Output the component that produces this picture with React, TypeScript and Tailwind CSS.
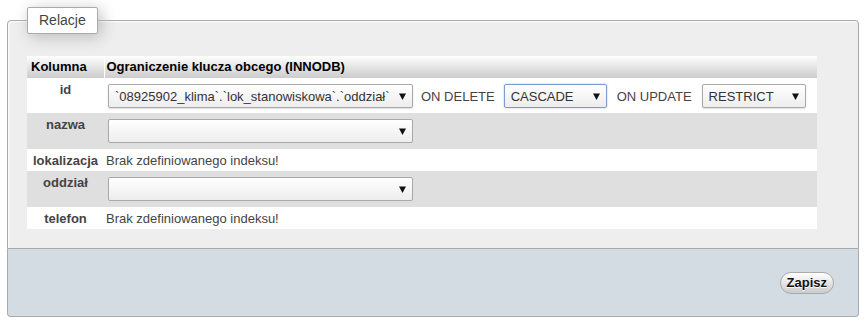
import React from "react";

const FONT = { fontFamily: '"Liberation Sans", Arial, sans-serif' };

function Arrow() {
  return (
    <svg width="7" height="7" viewBox="0 0 7 7" className="shrink-0">
      <polygon points="0,0.5 7,0.5 3.5,7" fill="#111" />
    </svg>
  );
}

function FakeSelect({
  value,
  width,
  focused,
}: {
  value: string;
  width: string;
  focused?: boolean;
}) {
  return (
    <div
      className={
        "flex h-[24px] shrink-0 items-center rounded-[2px] border bg-gradient-to-b from-white to-[#ededed] pl-[6px] pr-[6px] text-[13px] text-[#333] " +
        width +
        (focused
          ? " border-[#7b9ccf] shadow-[0_0_2px_#9fb9e0]"
          : " border-[#a9a9a9] shadow-[0_1px_2px_#ddd]")
      }
    >
      <span className="flex-1 overflow-hidden whitespace-nowrap pr-[10px] leading-[15px]">
        {value}
      </span>
      <Arrow />
    </div>
  );
}

const rows = [
  { name: "id", kind: "fk", bg: "bg-white", h: "h-[35px]" },
  { name: "nazwa", kind: "select", bg: "bg-[#dfdfdf]", h: "h-[36px]" },
  { name: "lokalizacja", kind: "none", bg: "bg-white", h: "h-[22px]" },
  { name: "oddział", kind: "select", bg: "bg-[#dfdfdf]", h: "h-[36px]" },
  { name: "telefon", kind: "none", bg: "bg-white", h: "h-[22px]" },
];

export default function App() {
  return (
    <div className="w-[866px] bg-white pt-[7px] text-[13px] text-[#444]" style={FONT}>
      <fieldset className="mx-[7px] rounded-t-[4px] border border-[#aaa] bg-[#eee] pb-[19px] pl-[19px] pr-[40px] pt-0 shadow-[inset_1px_1px_2px_#fff]">
        <legend className="rounded-[2px] border border-[#aaa] bg-white px-[11px] py-[4px] text-[14px] leading-[17px] text-[#444] shadow-[3px_3px_15px_#bbb]">
          Relacje
        </legend>
        <table className="mt-[22px] w-[790px] border-collapse">
          <thead>
            <tr className="h-[22px] bg-gradient-to-b from-white to-[#cccccc] text-left font-bold text-black">
              <th className="w-[77px] border-r border-white pl-[4px] font-bold">Kolumna</th>
              <th className="pl-[2px] font-bold">Ograniczenie klucza obcego (INNODB)</th>
            </tr>
          </thead>
          <tbody>
            {rows.map((r) => (
              <tr key={r.name} className={r.bg + " " + r.h}>
                <td
                  className={
                    "px-[4px] text-center font-bold leading-[15px] " +
                    (r.kind === "none" ? "align-middle" : "pt-[4px] align-top")
                  }
                >
                  {r.name}
                </td>
                {r.kind === "none" ? (
                  <td className="pl-[2px] align-middle leading-[15px]">
                    Brak zdefiniowanego indeksu!
                  </td>
                ) : r.kind === "select" ? (
                  <td className="pl-[4px] pt-[6px] align-top">
                    <FakeSelect value="" width="w-[305px]" />
                  </td>
                ) : (
                  <td className="pl-[4px] pt-[6px] align-top">
                    <div className="flex items-center">
                      <FakeSelect
                        value="`08925902_klima`.`lok_stanowiskowa`.`oddział`"
                        width="w-[305px]"
                      />
                      <span className="ml-[8px] mr-[9px] leading-[15px]">ON DELETE</span>
                      <FakeSelect value="CASCADE" width="w-[103px]" focused />
                      <span className="ml-[10px] mr-[10px] leading-[15px]">ON UPDATE</span>
                      <FakeSelect value="RESTRICT" width="w-[104px]" />
                    </div>
                  </td>
                )}
              </tr>
            ))}
          </tbody>
        </table>
      </fieldset>
      <div className="mx-[7px] flex h-[68px] items-center justify-end rounded-b-[4px] border border-t-0 border-[#aaa] bg-[#d3dce3] pr-[24px]">
        <button className="h-[22px] rounded-[20px] border border-[#aaa] bg-gradient-to-b from-white to-[#cccccc] px-[6px] text-[13px] font-bold leading-[15px] text-[#111] [text-shadow:0_1px_0_#fff]">
          Zapisz
        </button>
      </div>
    </div>
  );
}
